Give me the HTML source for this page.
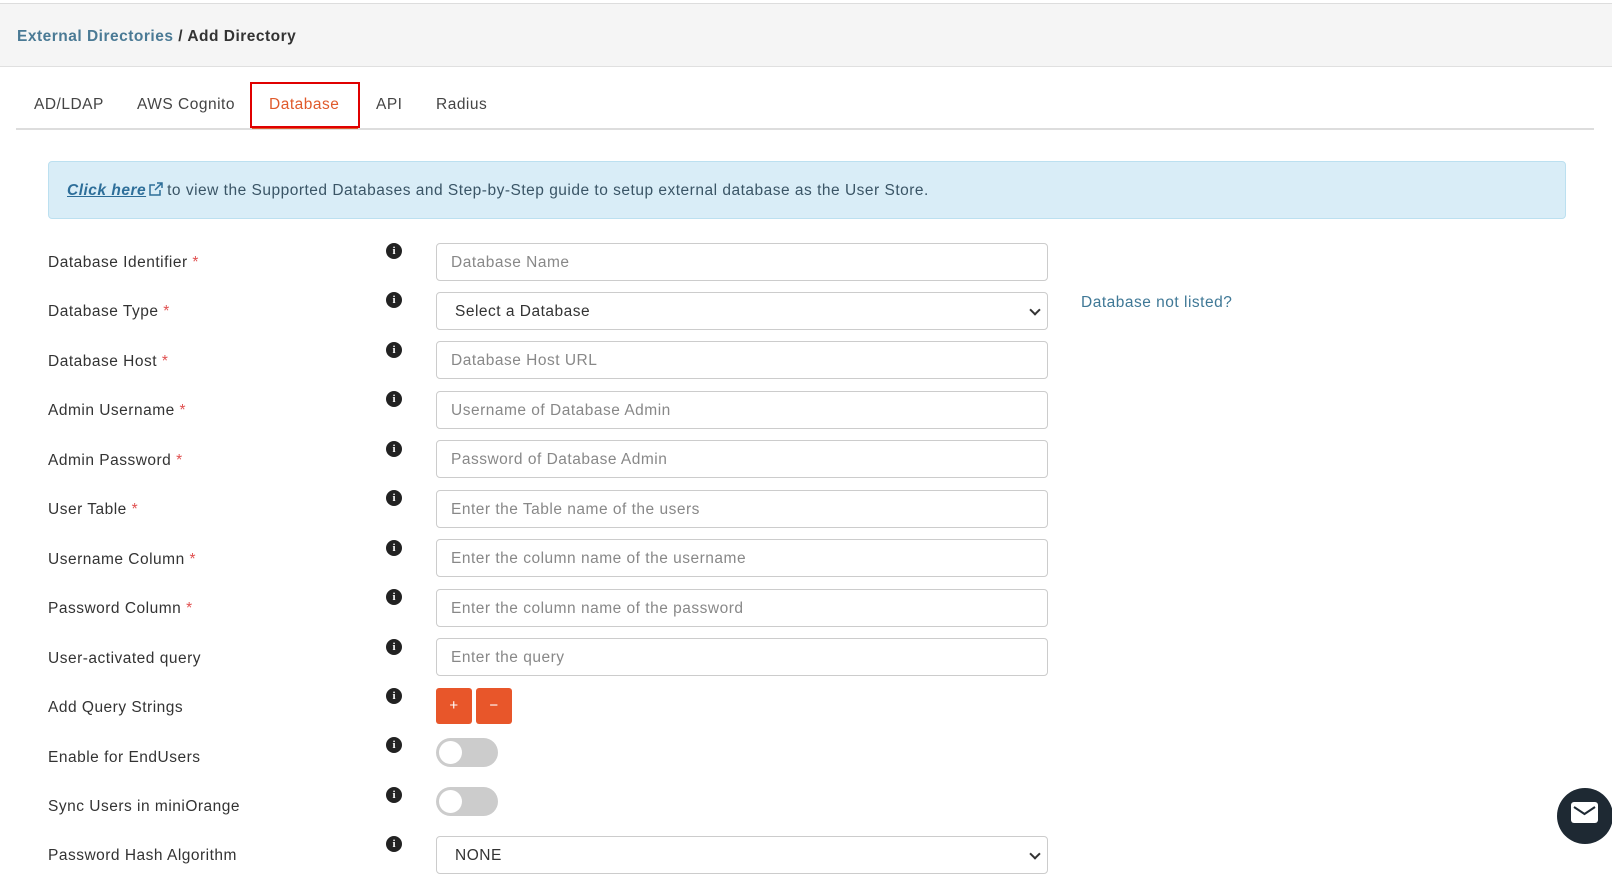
<!DOCTYPE html>
<html><head><meta charset="utf-8"><style>
*{box-sizing:border-box;margin:0;padding:0}
body{width:1612px;height:864px;overflow:hidden;background:#fff;font-family:"Liberation Sans",sans-serif;color:#333;position:relative;letter-spacing:0.5px}
.hdr{position:absolute;left:0;top:3px;width:1612px;height:64px;background:#f5f5f5;border-top:1px solid #ddd;border-bottom:1px solid #e0e0e0}
.bc{position:absolute;left:17px;top:24px;font-size:15.5px;font-weight:600;color:#333}
.bc span{color:#4a7a95}
.tabline{position:absolute;left:16px;top:128px;width:1578px;height:2px;background:#ddd}
.tab{position:absolute;top:96px;font-size:15.5px;color:#444}
.redbox{position:absolute;left:250px;top:82px;width:110px;height:46px;border:2px solid #e00000}
.alert{position:absolute;left:48px;top:161px;width:1518px;height:58px;background:#d9edf7;border:1px solid #bce0f0;border-radius:4px;font-size:15.5px;color:#3a5566;padding:20px 0 0 18px}
.alert a{color:#2d6e99;font-weight:bold;font-style:italic;text-decoration:underline}
.lbl{position:absolute;left:48px;font-size:15.5px;color:#333}
.req{color:#e05050}
.info{position:absolute;left:386px;width:16px;height:16px;border-radius:50%;background:#222;color:#fff;font-size:11px;font-weight:bold;font-family:"Liberation Serif",serif;text-align:center;line-height:16px;letter-spacing:0}
.inp{position:absolute;left:436px;width:612px;height:38px;border:1px solid #ccc;border-radius:4px;font-size:15.5px;color:#888;padding:10px 0 0 14px}
.sel{color:#333;padding-left:18px}
.chev{position:absolute;right:8px;top:13px;width:8px;height:8px;border-right:2px solid #333;border-bottom:2px solid #333;transform:rotate(45deg)}
.btn{position:absolute;top:688px;width:36px;height:36px;background:#e8562a;border-radius:3px;color:#fff;text-align:center;line-height:36px;font-size:15px}
.tog{position:absolute;left:436px;width:62px;height:29px;background:#ccc;border-radius:15px}
.tog:after{content:"";position:absolute;left:3px;top:3px;width:23px;height:23px;border-radius:50%;background:#fff}
</style></head><body>
<div class="hdr"><div class="bc"><span>External Directories</span> / Add Directory</div></div>
<div class="tab" style="left:34px">AD/LDAP</div>
<div class="tab" style="left:137px">AWS Cognito</div>
<div class="tab" style="left:269px;color:#e05a2b">Database</div>
<div class="tab" style="left:376px">API</div>
<div class="tab" style="left:436px">Radius</div>
<div class="tabline"></div>
<div style="position:absolute;left:252px;top:127px;width:106px;height:2px;background:#e05a2b"></div>
<div class="redbox"></div>
<div class="alert"><a>Click here</a><svg width="16" height="14" viewBox="0 0 16 14" style="vertical-align:-1px;margin:0 3px 0 2px"><path d="M7 3H2v10h10V8" fill="none" stroke="#2d6e99" stroke-width="1.5"/><path d="M9 1h5v5M14 1L7 8" fill="none" stroke="#2d6e99" stroke-width="1.5"/></svg>to view the Supported Databases and Step-by-Step guide to setup external database as the User Store.</div>

<div class="lbl" style="top:254px">Database Identifier <span class="req">*</span></div>
<div class="info" style="top:243px">i</div>
<div class="inp" style="top:243px">Database Name</div>

<div class="lbl" style="top:303px">Database Type <span class="req">*</span></div>
<div class="info" style="top:292px">i</div>
<div class="inp sel" style="top:292px">Select a Database<div class="chev"></div></div>
<div style="position:absolute;left:1081px;top:294px;font-size:15.5px;color:#3f7896">Database not listed?</div>

<div class="lbl" style="top:353px">Database Host <span class="req">*</span></div>
<div class="info" style="top:342px">i</div>
<div class="inp" style="top:341px">Database Host URL</div>

<div class="lbl" style="top:402px">Admin Username <span class="req">*</span></div>
<div class="info" style="top:391px">i</div>
<div class="inp" style="top:391px">Username of Database Admin</div>

<div class="lbl" style="top:452px">Admin Password <span class="req">*</span></div>
<div class="info" style="top:441px">i</div>
<div class="inp" style="top:440px">Password of Database Admin</div>

<div class="lbl" style="top:501px">User Table <span class="req">*</span></div>
<div class="info" style="top:490px">i</div>
<div class="inp" style="top:490px">Enter the Table name of the users</div>

<div class="lbl" style="top:551px">Username Column <span class="req">*</span></div>
<div class="info" style="top:540px">i</div>
<div class="inp" style="top:539px">Enter the column name of the username</div>

<div class="lbl" style="top:600px">Password Column <span class="req">*</span></div>
<div class="info" style="top:589px">i</div>
<div class="inp" style="top:589px">Enter the column name of the password</div>

<div class="lbl" style="top:650px">User-activated query</div>
<div class="info" style="top:639px">i</div>
<div class="inp" style="top:638px">Enter the query</div>

<div class="lbl" style="top:699px">Add Query Strings</div>
<div class="info" style="top:688px">i</div>
<div class="btn" style="left:436px">+</div>
<div class="btn" style="left:476px">−</div>

<div class="lbl" style="top:749px">Enable for EndUsers</div>
<div class="info" style="top:737px">i</div>
<div class="tog" style="top:738px"></div>

<div class="lbl" style="top:798px">Sync Users in miniOrange</div>
<div class="info" style="top:787px">i</div>
<div class="tog" style="top:787px"></div>

<div class="lbl" style="top:847px">Password Hash Algorithm</div>
<div class="info" style="top:836px">i</div>
<div class="inp sel" style="top:836px;color:#333">NONE<div class="chev"></div></div>

<div style="position:absolute;left:1557px;top:788px;width:56px;height:56px;border-radius:50%;background:#1e2933"><div style="position:absolute;left:14px;top:14px;width:27px;height:21px;background:#fff;border-radius:3px"></div><svg width="27" height="21" style="position:absolute;left:14px;top:14px"><path d="M3 5L13.5 12L24 5" fill="none" stroke="#1e2933" stroke-width="2"/></svg></div>
</body></html>
